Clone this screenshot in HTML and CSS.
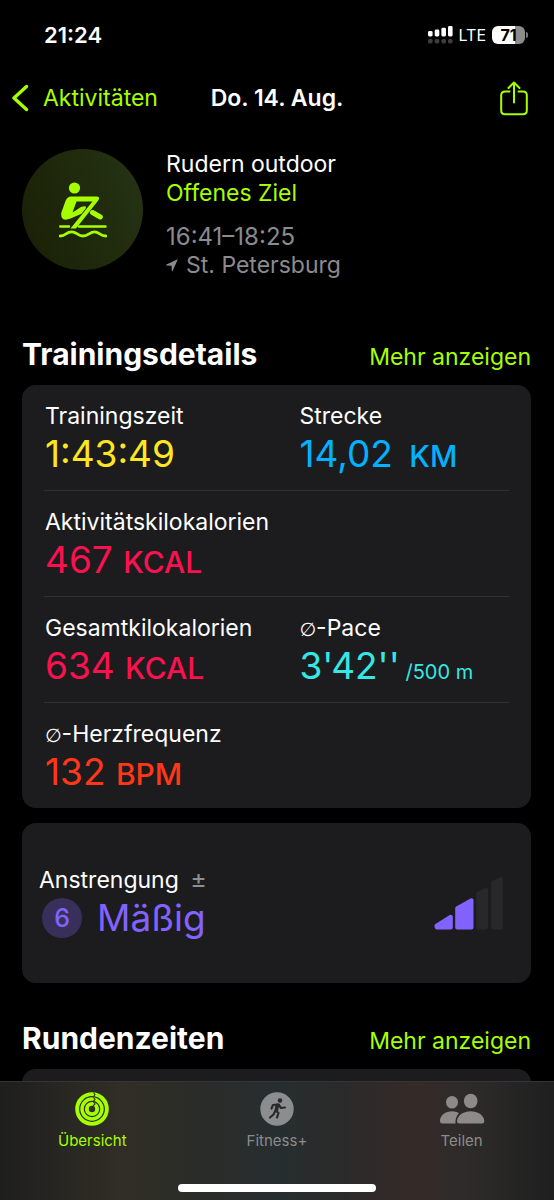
FILE: index.html
```html
<!DOCTYPE html>
<html lang="de">
<head>
<meta charset="utf-8">
<meta name="viewport" content="width=device-width, initial-scale=1">
<title>Rudern outdoor</title>
<link rel="stylesheet" href="styles.css">
</head>
<body>
<div class="status">
  <span class="status-time">21:24</span>
  <span class="status-right">
    <svg class="signal" width="25" height="18" viewBox="0 0 25 18" aria-hidden="true">
      <g fill="#fff"><rect x="0" y="5" width="4.6" height="5.5" rx="1.4"/><rect x="6.7" y="3.6" width="4.6" height="6.9" rx="1.4"/><rect x="13.4" y="1.8" width="4.6" height="8.7" rx="1.4"/><rect x="20" y="0" width="4.6" height="10.5" rx="1.4"/></g>
      <g fill="#3d3d3d"><rect x="0" y="13" width="4.6" height="4.4" rx="1.6"/><rect x="6.7" y="13" width="4.6" height="4.4" rx="1.6"/><rect x="13.4" y="13" width="4.6" height="4.4" rx="1.6"/><rect x="20" y="13" width="4.6" height="4.4" rx="1.6"/></g>
    </svg>
    <span class="network">LTE</span>
    <span class="battery"><span class="battery-body">71</span><span class="battery-tip"></span></span>
  </span>
</div>

<header class="nav">
  <a class="back" href="#">
    <svg width="17" height="28" viewBox="0 0 17 28" fill="none" stroke="currentColor" stroke-width="3.4" stroke-linecap="round" stroke-linejoin="round" aria-hidden="true"><path d="M14.500 2.500 2 14 14.500 25.500"/></svg>
    <span>Aktivitäten</span>
  </a>
  <h1 class="nav-title">Do. 14. Aug.</h1>
  <button class="share" type="button" aria-label="Teilen">
    <svg width="28" height="35" viewBox="0 0 28 35" fill="none" stroke="currentColor" stroke-width="2" stroke-linecap="round" stroke-linejoin="round" aria-hidden="true"><path d="M9.500 10.500H5Q1.200 10.500 1.200 14.300V29.500Q1.200 33.300 5 33.300H23Q26.800 33.300 26.800 29.500V14.300Q26.800 10.500 23 10.500H18.500M14 21.500V1.500M8.500 7 14 1.500 19.500 7"/></svg>
  </button>
</header>

<main class="content">
  <section class="workout">
    <div class="workout-icon">
      <svg width="48" height="56" viewBox="0 0 48 56" fill="none" stroke="#a6ff00" stroke-linecap="round" stroke-linejoin="round" aria-hidden="true">
        <circle cx="15.500" cy="6" r="5.600" fill="#a6ff00" stroke="none"/>
        <path fill="#a6ff00" stroke="none" d="M12 14.500H37.500Q41 14.500 39.800 17.500L38 20 17 46.500H11.500L33.500 19.500H17.500L13.500 30.500 22 25Q28.500 23 26.500 26.800L22.500 31.800 11.500 36.600Q1.500 40.500 2.200 31L6.500 19Q8.300 14.500 12 14.500Z"/>
        <path d="M33.500 30.500 41.300 35" stroke-width="5"/>
        <path d="M1.300 44.500H10M20 44.500H46.500" stroke-width="2.500"/>
        <path d="M1.300 54C7 54 7 49.800 12.500 49.800S18.500 54 24 54 30.500 49.800 35.500 49.800 41 54 46.700 54" stroke-width="2.800"/>
      </svg>
    </div>
    <div class="workout-info">
      <p class="workout-name">Rudern outdoor</p>
      <p class="workout-goal">Offenes Ziel</p>
      <p class="workout-time">16:41–18:25</p>
      <p class="workout-place"><svg width="12" height="13" viewBox="0 0 12 13" fill="currentColor" aria-hidden="true"><path d="M11.600.7Q11.900 0 11.100.4L.5 5.600Q-.2 6.300.6 6.500L5.600 6.700 5.800 11.900Q6.100 12.800 6.600 12Z"/></svg>St. Petersburg</p>
    </div>
  </section>

  <section>
    <div class="section-head first"><h2>Trainingsdetails</h2><a href="#">Mehr anzeigen</a></div>
    <div class="card details">
      <div class="row">
        <div class="metric yellow"><span class="label">Trainingszeit</span><span class="value">1:43:49</span></div>
        <div class="metric blue"><span class="label">Strecke</span><span class="value">14,02 <span class="unit spaced">KM</span></span></div>
      </div>
      <div class="row">
        <div class="metric pink"><span class="label">Aktivitätskilokalorien</span><span class="value">467 <span class="unit">KCAL</span></span></div>
      </div>
      <div class="row">
        <div class="metric pink"><span class="label">Gesamtkilokalorien</span><span class="value">634 <span class="unit">KCAL</span></span></div>
        <div class="metric teal"><span class="label"><span class="average">∅</span>-Pace</span><span class="value">3'42''<span class="per"> /500 m</span></span></div>
      </div>
      <div class="row">
        <div class="metric red"><span class="label"><span class="average">∅</span>-Herzfrequenz</span><span class="value">132 <span class="unit">BPM</span></span></div>
      </div>
    </div>
    <div class="card effort">
      <div>
        <p class="effort-label">Anstrengung <span class="plusminus">±</span></p>
        <p class="effort-value"><span class="effort-badge">6</span>Mäßig</p>
      </div>
      <svg width="70" height="53" viewBox="0 0 70 53" stroke-linejoin="round" stroke-width="4" aria-hidden="true">
        <g fill="#8263ff" stroke="#8263ff"><path d="M2.500 49.500V48.800L16.800 39.800V50.500H3Z"/><path d="M23.200 31.300 37.500 23.300V50.500H23.200Z"/></g>
        <g fill="#28282a" stroke="#28282a"><path d="M44.300 16.500 52 12.800V50.500H44.300Z"/><path d="M59.200 5.800 66.800 2V50.500H59.200Z"/></g>
      </svg>
    </div>
  </section>

  <section>
    <div class="section-head"><h2>Rundenzeiten</h2><a href="#">Mehr anzeigen</a></div>
    <div class="card laps"></div>
  </section>
</main>

<nav class="tabs">
  <div class="tab-list">
    <a class="tab active" href="#">
      <svg width="34" height="34" viewBox="0 0 34 34" aria-hidden="true">
        <circle cx="17" cy="17" r="16.800" fill="#a6ff00"/>
        <g fill="none" stroke="#302e25" stroke-width="1.200"><circle cx="17" cy="17" r="12.300"/><circle cx="17" cy="17" r="7.700"/></g>
        <circle cx="17" cy="17" r="3.200" fill="#302e25"/>
        <path d="M18.500.5 20 2.500 18.500 4.500M18.500 5.500 20 7.500 18.500 9M18.500 10 20 12 18 14" fill="none" stroke="#302e25" stroke-width="1.100"/>
      </svg>
      <span>Übersicht</span>
    </a>
    <a class="tab" href="#">
      <svg width="34" height="34" viewBox="0 0 34 34" aria-hidden="true">
        <circle cx="17" cy="17" r="16.700" fill="#8b8d8e"/>
        <circle cx="20" cy="8.500" r="2.300" fill="#282b2c"/>
        <path d="M17 12.500 15.500 18.500 18.500 21 17 25.500M15 19.500 13.500 22.500 10 25.500M17.500 12.500 13 13 11.500 16.500M18.500 12.500 21 16 25 15.500" fill="none" stroke="#282b2c" stroke-width="2.200" stroke-linecap="round" stroke-linejoin="round"/>
        <path d="M16 12H19.500L18 19H14.500Z" fill="#282b2c"/>
      </svg>
      <span>Fitness+</span>
    </a>
    <a class="tab" href="#">
      <svg width="46" height="34" viewBox="0 0 46 34" fill="#8e8a89" aria-hidden="true">
        <ellipse cx="13" cy="10.300" rx="6" ry="6.300"/><ellipse cx="31.700" cy="9" rx="6.800" ry="7.300"/>
        <path d="M1 29C1 23 7 19.300 13 19.300Q17 19.300 20 21C17.500 24 16 27 16.500 31.500H3Q1 31.500 1 29ZM18 29C18.500 23 25 19.300 31.700 19.300S45 23 45.300 29Q45.300 31.500 43 31.500H20.500Q18 31.500 18 29Z"/>
      </svg>
      <span>Teilen</span>
    </a>
  </div>
  <div class="home-bar"></div>
</nav>
</body>
</html>
```

FILE: styles.css
```css
* { box-sizing: border-box; }
body {
  margin: 0;
  min-height: 100vh;
  overflow-x: hidden;
  background: #000;
  color: #fff;
  font-family: Inter, "Liberation Sans", sans-serif;
  font-size: 23px;
  line-height: 29px;
}
h1, h2, p { margin: 0; }
a { color: #a6ff00; text-decoration: none; }
svg { display: block; flex: none; }

.status {
  display: flex;
  justify-content: space-between;
  align-items: center;
  height: 70px;
  padding: 0 26px 0 44px;
}
.status-time { font-size: 22px; font-weight: 600; }
.status-right { display: flex; align-items: center; gap: 6px; }
.network { font-size: 16px; line-height: 20px; }
.battery { display: flex; align-items: center; gap: 1px; }
.battery-body {
  width: 33px;
  border-radius: 6px;
  background: linear-gradient(90deg, #fff 70%, #8c8c8c 70%);
  color: #000;
  font-size: 16px;
  font-weight: 700;
  line-height: 18px;
  text-align: center;
}
.battery-tip { width: 2px; height: 6px; border-radius: 0 2px 2px 0; background: #777; }

.nav {
  display: grid;
  grid-template-columns: 1fr auto 1fr;
  align-items: center;
  height: 56px;
  padding: 0 12px;
}
.back { display: flex; align-items: center; gap: 14px; }
.nav-title { font-size: 23px; line-height: 29px; font-weight: 600; }
.share { justify-self: end; margin-right: 14px; padding: 0; border: 0; background: none; color: #a6ff00; }

.content { padding: 23px 23px 0 22px; }
.workout { display: flex; gap: 23px; }
.workout-icon {
  display: flex;
  align-items: center;
  justify-content: center;
  width: 121px;
  height: 121px;
  border-radius: 50%;
  background: linear-gradient(70deg, #191f05, #263414);
}
.workout-info { padding-top: 1px; }
.workout-goal { color: #a6ff00; }
.workout-time { margin-top: 14px; font-size: 24px; }
.workout-time, .workout-place { color: #8a8a8f; }
.workout-place { display: flex; align-items: center; gap: 8px; }

.section-head { display: flex; justify-content: space-between; align-items: baseline; padding-top: 38px; }
.section-head.first { padding-top: 57px; }
.section-head h2 { font-size: 30px; line-height: 34px; font-weight: 700; }
.card { border-radius: 14px; background: #1c1c1e; }
.details { margin-top: 13px; padding: 0 22px; }
.row { display: grid; grid-template-columns: 1fr 1fr; height: 106px; padding-top: 17px; border-bottom: 1px solid #303032; }
.row:last-child { height: 105px; border-bottom: 0; }
.metric { display: flex; flex-direction: column; padding-left: 1px; white-space: nowrap; }
.metric + .metric { padding-left: 23px; }
.value { font-size: 37px; line-height: 46px; }
.unit { font-size: 30px; font-weight: 500; }
.spaced { margin-left: 6px; }
.per { font-size: 20px; }
.label { color: #fff; }
.average { font-family: "DejaVu Sans", sans-serif; font-size: 19px; line-height: 20px; }
.yellow { color: #ffe620; }
.blue { color: #00b2ff; }
.pink { color: #fa1150; }
.teal { color: #35e8e5; }
.red { color: #ff3718; }

.effort {
  display: flex;
  align-items: center;
  justify-content: space-between;
  height: 160px;
  margin-top: 15px;
  padding: 0 27px 0 17px;
}
.plusminus { margin-left: 5px; color: #8e8e93; font-size: 25px; }
.effort-value { display: flex; align-items: center; gap: 15px; padding-left: 3px; color: #8263ff; font-size: 37px; line-height: 46px; }
.effort-badge {
  width: 40px;
  border-radius: 50%;
  background: #382f5b;
  font-size: 25px;
  font-weight: 500;
  line-height: 40px;
  text-align: center;
}
.laps { height: 131px; margin-top: 13px; }

.tabs {
  position: fixed;
  inset: auto 0 0;
  height: 119px;
  padding-top: 10px;
  border-top: 1px solid #353536;
  background: linear-gradient(90deg, #1e1e1e, #302e25 22%, #2b2c29 35%, #272e2f 50%, #2b2a2a 62%, #352a28 75%, #2d2b2a 85%, #1f1f1f);
}
.tab-list { display: grid; grid-template-columns: repeat(3, 1fr); }
.tab { display: flex; flex-direction: column; align-items: center; gap: 5px; color: #8b8b8b; font-size: 15px; line-height: 20px; }
.active { color: #a6ff00; }
.home-bar { width: 198px; height: 8px; margin: 33px auto 0; border-radius: 4px; background: #fff; }
```
